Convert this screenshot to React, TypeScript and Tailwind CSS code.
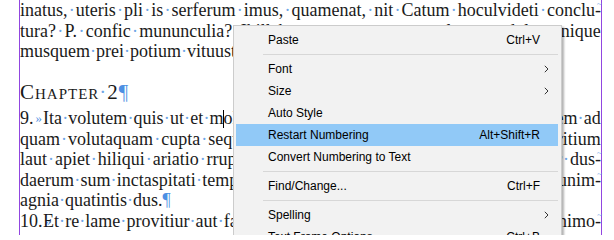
import { Fragment, type ReactNode } from "react";

const serif = { fontFamily: '"Liberation Serif", "Times New Roman", serif' };
const sans = { fontFamily: '"Liberation Sans", Arial, sans-serif' };

// hidden-character markers
const Dot = () => <span className="text-[#6fa6e6]">·</span>;
const Pilcrow = () => <span className="text-[#4d8fe3]">¶</span>;
const Hyph = ({ children }: { children: ReactNode }) => (
  <span className="relative">
    {children}
    <span className="absolute -right-[1px] top-[0px] text-[9px] leading-none text-[#6fa6e6]">~</span>
  </span>
);
// list number followed by a tab to the 23px stop
const Num = ({ n }: { n: string }) => (
  <span className="inline-flex w-[23px] whitespace-nowrap">
    {n}
    <span className="ml-[2px] text-[13px] text-[#4d8fe3]">»</span>
  </span>
);

function Justified({ words }: { words: ReactNode[] }) {
  return (
    <div className="flex justify-between whitespace-nowrap">
      {words.map((w, i) => (
        <Fragment key={i}>
          {i > 0 && <Dot />}
          <span>{w}</span>
        </Fragment>
      ))}
    </div>
  );
}

function Ragged({ words, end }: { words: ReactNode[]; end?: ReactNode }) {
  return (
    <div className="whitespace-nowrap">
      {words.map((w, i) => (
        <Fragment key={i}>
          {i > 0 && <Dot />}
          {w}
        </Fragment>
      ))}
      {end}
    </div>
  );
}

const split = (s: string) => s.split(" ");

type Item =
  | { sep: true }
  | { label: string; shortcut?: string; sub?: boolean; active?: boolean; sep?: false };

const menu: Item[] = [
  { label: "Paste", shortcut: "Ctrl+V" },
  { sep: true },
  { label: "Font", sub: true },
  { label: "Size", sub: true },
  { label: "Auto Style" },
  { label: "Restart Numbering", shortcut: "Alt+Shift+R", active: true },
  { label: "Convert Numbering to Text" },
  { sep: true },
  { label: "Find/Change...", shortcut: "Ctrl+F" },
  { sep: true },
  { label: "Spelling", sub: true },
  { label: "Text Frame Options...", shortcut: "Ctrl+B" },
];

function ContextMenu() {
  return (
    <div
      className="absolute left-[233px] top-[25px] w-[329px] border border-[#cccccc] bg-[#f2f2f2] pt-[3px] pb-[3px] text-[12px] text-black shadow-[2px_2px_2px_rgba(0,0,0,0.3)]"
      style={sans}
    >
      {menu.map((item, i) =>
        item.sep ? (
          <div key={i} className="ml-[29px] mr-[3px] my-[3px] h-px bg-[#d7d7d7]" />
        ) : (
          <div
            key={i}
            className={`ml-[2px] mr-[3px] flex h-[22px] items-center pl-[32px] ${item.active ? "bg-[#91c9f7]" : ""}`}
          >
            <span className="flex-1">{item.label}</span>
            {item.shortcut && <span>{item.shortcut}</span>}
            <span className="flex w-[18px] items-center pl-[4px]">
              {item.sub && (
                <svg width="5" height="8" viewBox="0 0 5 8" fill="none">
                  <path d="M0.8 0.8 L4 4 L0.8 7.2" stroke="#333" strokeWidth="1" />
                </svg>
              )}
            </span>
          </div>
        )
      )}
    </div>
  );
}

export default function App() {
  return (
    <div className="relative h-[235px] w-[614px] overflow-hidden bg-white">
      {/* text frame */}
      <div
        className="ml-[19px] h-[235px] w-[583px] border-x border-[#9146e0] text-[18px] leading-[20.5px] text-[#1a1a1a]"
        style={serif}
      >
        <Justified
          words={[...split("inatus, uteris pli is serferum imus, quamenat, nit Catum hoculvideti"), <Hyph>conclu-</Hyph>]}
        />
        <Justified
          words={split("tura? P. confic mununculia? Ihillab orerum quassunt voluptaes dolore nique")}
        />
        <Ragged words={split("musquem prei potium vituust, quisciis nobis.")} end={<Pilcrow />} />

        <div className="mt-[17.5px] mb-[3px] text-[21px] leading-[26px] tracking-[1px] [font-variant:small-caps]">
          Chapter<Dot />2<Pilcrow />
        </div>

        <Justified
          words={[
            <><Num n="9." />Ita</>,
            ...split("volutem quis ut et"),
            <>m<span className="relative -top-[1px] mx-[-0.5px] inline-block h-[18px] w-px bg-black align-middle" />olorem</>,
            ...split("faccus aut debitatum exerios et volorem ad"),
          ]}
        />
        <Justified
          words={split("quam volutaquam cupta sequiae voluptat remped quodis dolut alit exeritium")}
        />
        <Justified
          words={[
            ...split("laut apiet hiliqui ariatio rruptatem nit aborit ea volupta quiducia sitatur"),
            <Hyph>dus-</Hyph>,
          ]}
        />
        <Justified
          words={[
            ...split("daerum sum inctaspitati tempore natur quia dolupta et volorro consequi"),
            <Hyph>unim-</Hyph>,
          ]}
        />
        <Ragged words={split("agnia quatintis dus.")} end={<Pilcrow />} />
        <Justified
          words={[
            <><Num n="10." />Et</>,
            ...split("re lame provitiur aut facest ut hil ipsanda dolorrum sequas qui ad"),
            <Hyph>nimo-</Hyph>,
          ]}
        />
      </div>

      <ContextMenu />
    </div>
  );
}
